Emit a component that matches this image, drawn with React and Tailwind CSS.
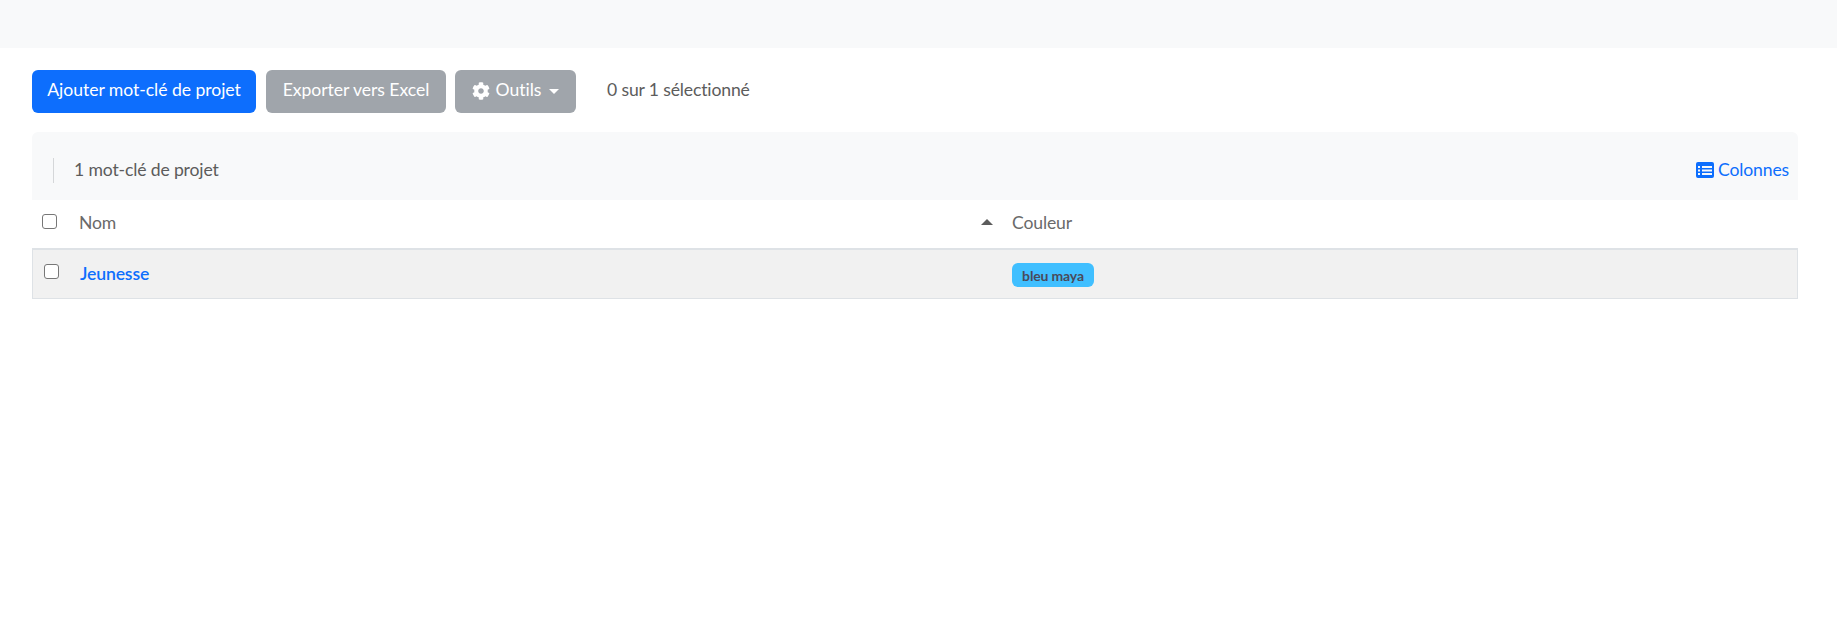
import { FaCog } from 'react-icons/fa'

function App() {
  return (
    <div className="min-h-screen bg-white font-['Lato','Noto_Sans',sans-serif] text-[#5c5c5c] text-[17.6px] tracking-[-0.15px]">
      <div className="h-[48px] bg-[#f8f9fa]"></div>

      <div className="pl-[32px] pr-[39px]">
        <div className="flex items-center pt-[22px]">
          <button className="h-[43px] w-[224px] pb-[2px] bg-[#0d6efd] text-white rounded-[6px] tracking-[-0.05px]">
            Ajouter mot-clé de projet
          </button>
          <button className="h-[43px] w-[180px] ml-[10px] pb-[2px] bg-[#a0a5ab] text-white rounded-[6px] tracking-[-0.05px]">
            Exporter vers Excel
          </button>
          <button className="h-[43px] w-[121px] ml-[9px] pb-[2px] bg-[#a0a5ab] text-white rounded-[6px] tracking-[-0.05px] flex items-center justify-center">
            <FaCog className="w-[18px] h-[18px] mr-[6px]" />
            Outils
            <span className="ml-[8px] mt-[1px] border-x-[5px] border-x-transparent border-t-[5px] border-t-white"></span>
          </button>
          <span className="ml-[31px] -mt-[2px]">0 sur 1 sélectionné</span>
        </div>

        <div className="mt-[19px] h-[68px] bg-[#f8f9fa] rounded-t-[6px] flex items-center justify-between pl-[21px] pr-[9px]">
          <div className="flex items-center mt-[9px]">
            <div className="w-[1px] h-[25px] bg-[#d5d7d9]"></div>
            <span className="ml-[20px]">1 mot-clé de projet</span>
          </div>
          <a className="flex items-center mt-[9px] text-[#0d6efd]">
            <svg viewBox="0 0 18 16" className="w-[18px] h-[16px] mr-[4px]">
              <path fill="currentColor" fillRule="evenodd" d="M2 0h14a2 2 0 0 1 2 2v12a2 2 0 0 1-2 2H2a2 2 0 0 1-2-2V2a2 2 0 0 1 2-2zM2 4v2h2V4zM6 4v2h10V4zM2 7.5v2h2v-2zM6 7.5v2h10v-2zM2 11v2h2v-2zM6 11v2h10v-2z" />
            </svg>
            Colonnes
          </a>
        </div>

        <div className="flex items-center h-[48px]">
          <input type="checkbox" className="ml-[10px] -mt-[6px] w-[15px] h-[15px] appearance-none bg-white border border-[#777] rounded-[3px]" />
          <span className="ml-[22px] w-[902px] -mt-[2px] text-[#6a6a6a]">Nom</span>
          <span className="w-0 h-0 border-x-[6px] border-x-transparent border-b-[6px] border-b-[#5c5c5c] -mt-[4px]"></span>
          <span className="ml-[19px] -mt-[2px] text-[#6a6a6a]">Couleur</span>
        </div>

        <div className="flex items-center h-[51px] bg-[#f1f1f1] border border-[#dee2e6] border-t-2">
          <input type="checkbox" className="ml-[11px] -mt-[6px] w-[15px] h-[15px] appearance-none bg-white border border-[#777] rounded-[3px]" />
          <a className="ml-[21px] w-[932px] font-semibold text-[#0d6efd] mt-[1px]">Jeunesse</a>
          <span className="h-[24px] w-[82px] mt-[2px] flex items-center justify-center bg-[#40bfff] rounded-[6px] text-[14px] font-bold text-[#4a4a5a]">
            bleu maya
          </span>
        </div>
      </div>
    </div>
  )
}

export default App
